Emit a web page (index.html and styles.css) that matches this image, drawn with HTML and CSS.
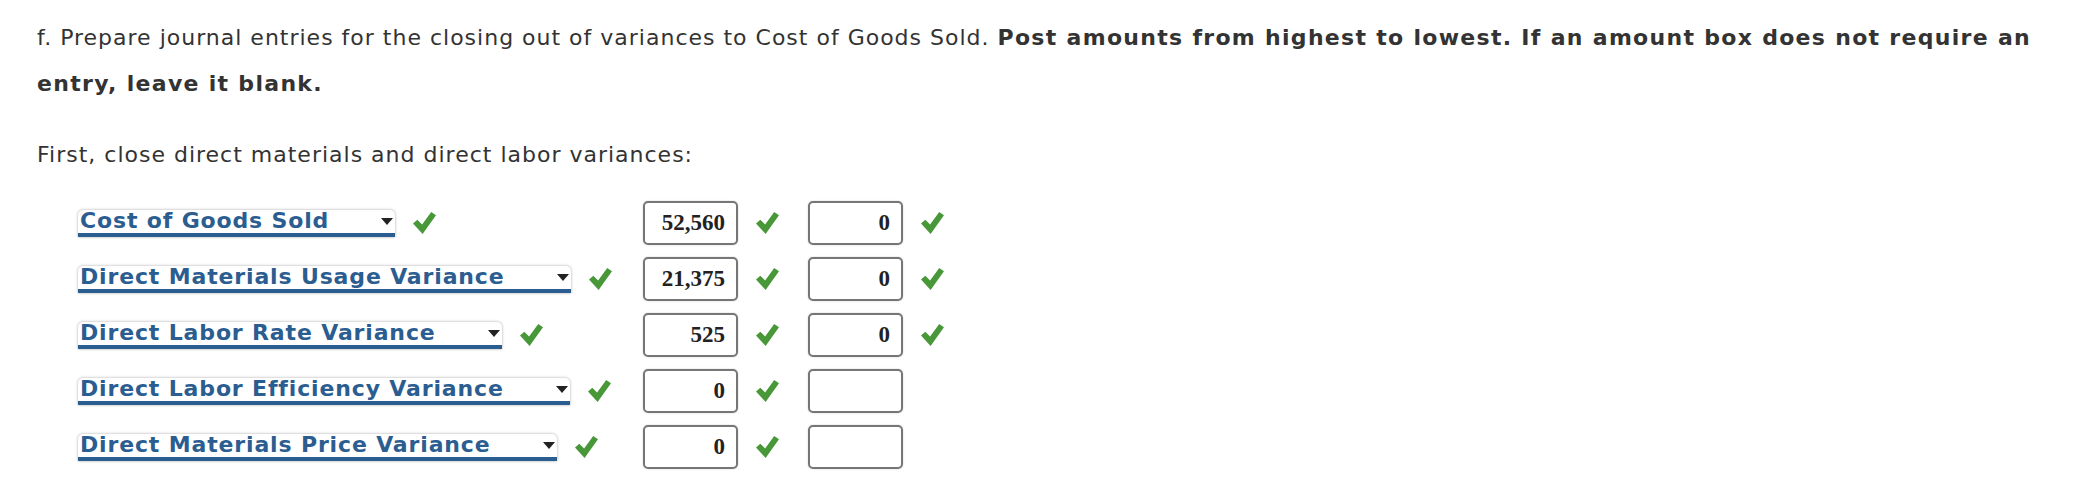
FILE: index.html
```html
<!DOCTYPE html>
<html lang="en">

<head>
  <meta charset="utf-8">
  <title>Closing out variances</title>
  <meta name="viewport" content="width=device-width, initial-scale=1.0">
  <link rel="stylesheet" href="styles.css">
</head>

<body>
  <div class="question">
    <p class="prompt">f. Prepare journal entries for the closing out of variances to Cost of Goods Sold. <b>Post amounts from highest to lowest. If an amount box does not require an</b> <b>entry, leave it blank.</b></p>
    <p class="step">First, close direct materials and direct labor variances:</p>

    <div class="entries">
      <!-- row 1 -->
      <div class="account">
        <span class="select">Cost of Goods Sold<i class="arrow"></i></span>
        <svg class="check" viewBox="0 0 24 24"><polygon points="0,12.5 4.5,8.5 9.5,13.5 19,0.5 24,4 10,23.5"/></svg>
      </div>
      <div class="amount">52,560</div>
      <svg class="check" viewBox="0 0 24 24"><polygon points="0,12.5 4.5,8.5 9.5,13.5 19,0.5 24,4 10,23.5"/></svg>
      <div class="amount">0</div>
      <svg class="check" viewBox="0 0 24 24"><polygon points="0,12.5 4.5,8.5 9.5,13.5 19,0.5 24,4 10,23.5"/></svg>

      <!-- row 2 -->
      <div class="account">
        <span class="select">Direct Materials Usage Variance<i class="arrow"></i></span>
        <svg class="check" viewBox="0 0 24 24"><polygon points="0,12.5 4.5,8.5 9.5,13.5 19,0.5 24,4 10,23.5"/></svg>
      </div>
      <div class="amount">21,375</div>
      <svg class="check" viewBox="0 0 24 24"><polygon points="0,12.5 4.5,8.5 9.5,13.5 19,0.5 24,4 10,23.5"/></svg>
      <div class="amount">0</div>
      <svg class="check" viewBox="0 0 24 24"><polygon points="0,12.5 4.5,8.5 9.5,13.5 19,0.5 24,4 10,23.5"/></svg>

      <!-- row 3 -->
      <div class="account">
        <span class="select">Direct Labor Rate Variance<i class="arrow"></i></span>
        <svg class="check" viewBox="0 0 24 24"><polygon points="0,12.5 4.5,8.5 9.5,13.5 19,0.5 24,4 10,23.5"/></svg>
      </div>
      <div class="amount">525</div>
      <svg class="check" viewBox="0 0 24 24"><polygon points="0,12.5 4.5,8.5 9.5,13.5 19,0.5 24,4 10,23.5"/></svg>
      <div class="amount">0</div>
      <svg class="check" viewBox="0 0 24 24"><polygon points="0,12.5 4.5,8.5 9.5,13.5 19,0.5 24,4 10,23.5"/></svg>

      <!-- row 4 -->
      <div class="account">
        <span class="select">Direct Labor Efficiency Variance<i class="arrow"></i></span>
        <svg class="check" viewBox="0 0 24 24"><polygon points="0,12.5 4.5,8.5 9.5,13.5 19,0.5 24,4 10,23.5"/></svg>
      </div>
      <div class="amount">0</div>
      <svg class="check" viewBox="0 0 24 24"><polygon points="0,12.5 4.5,8.5 9.5,13.5 19,0.5 24,4 10,23.5"/></svg>
      <div class="amount"></div>
      <span></span>

      <!-- row 5 -->
      <div class="account">
        <span class="select">Direct Materials Price Variance<i class="arrow"></i></span>
        <svg class="check" viewBox="0 0 24 24"><polygon points="0,12.5 4.5,8.5 9.5,13.5 19,0.5 24,4 10,23.5"/></svg>
      </div>
      <div class="amount">0</div>
      <svg class="check" viewBox="0 0 24 24"><polygon points="0,12.5 4.5,8.5 9.5,13.5 19,0.5 24,4 10,23.5"/></svg>
      <div class="amount"></div>
      <span></span>
    </div>
  </div>
</body>

</html>
```

FILE: styles.css
```css
:root {
  --text-color: rgb(51, 51, 51);
  --link-color: rgb(43, 93, 145);
  --check-color: rgb(72, 152, 58);
  --box-border: rgb(118, 118, 118);
  --row-height: 56px;
}

body {
  margin: 0;
  background: white;
  color: var(--text-color);
  font-family: Verdana, "DejaVu Sans", sans-serif;
  font-size: 22px;
}

.question {
  width: 2040px;
  padding-left: 37px;
}

.prompt {
  margin: 15px 0 0;
  line-height: 46px;
  letter-spacing: 1px;
}

.prompt b {
  letter-spacing: 1.3px;
}

.step {
  margin: 25px 0 0;
  line-height: 46px;
  letter-spacing: 1px;
}

.entries {
  display: grid;
  grid-template-columns: 547px 95px 23px 106px 23px;
  grid-auto-rows: var(--row-height);
  column-gap: 18px;
  align-items: center;
  margin-top: 17px;
  margin-left: 41px;
}

.account {
  display: flex;
  align-items: center;
  gap: 18px;
}

.select {
  position: relative;
  display: inline-block;
  padding: 0 66px 0 2px;
  height: 23px;
  line-height: 22px;
  background: white;
  border-radius: 5px 5px 0 0;
  box-shadow: 0 0 3px rgba(0, 0, 0, 0.35);
  border-bottom: 4px solid var(--link-color);
  color: var(--link-color);
  font-weight: bold;
  letter-spacing: 0.85px;
  white-space: nowrap;
}

.arrow {
  position: absolute;
  right: 2px;
  top: 8px;
  width: 0;
  height: 0;
  border-left: 6px solid transparent;
  border-right: 6px solid transparent;
  border-top: 7px solid rgb(34, 34, 34);
}

.check {
  width: 23px;
  height: 24px;
  fill: var(--check-color);
}

.amount {
  box-sizing: border-box;
  width: 95px;
  height: 44px;
  justify-self: end;
  padding-right: 11px;
  border: 2px solid var(--box-border);
  border-radius: 5px;
  box-shadow: 0 0 2px rgba(0, 0, 0, 0.2);
  font-family: "Liberation Serif", "Times New Roman", serif;
  font-weight: bold;
  font-size: 23px;
  line-height: 40px;
  text-align: right;
  color: rgb(34, 34, 34);
}
```
